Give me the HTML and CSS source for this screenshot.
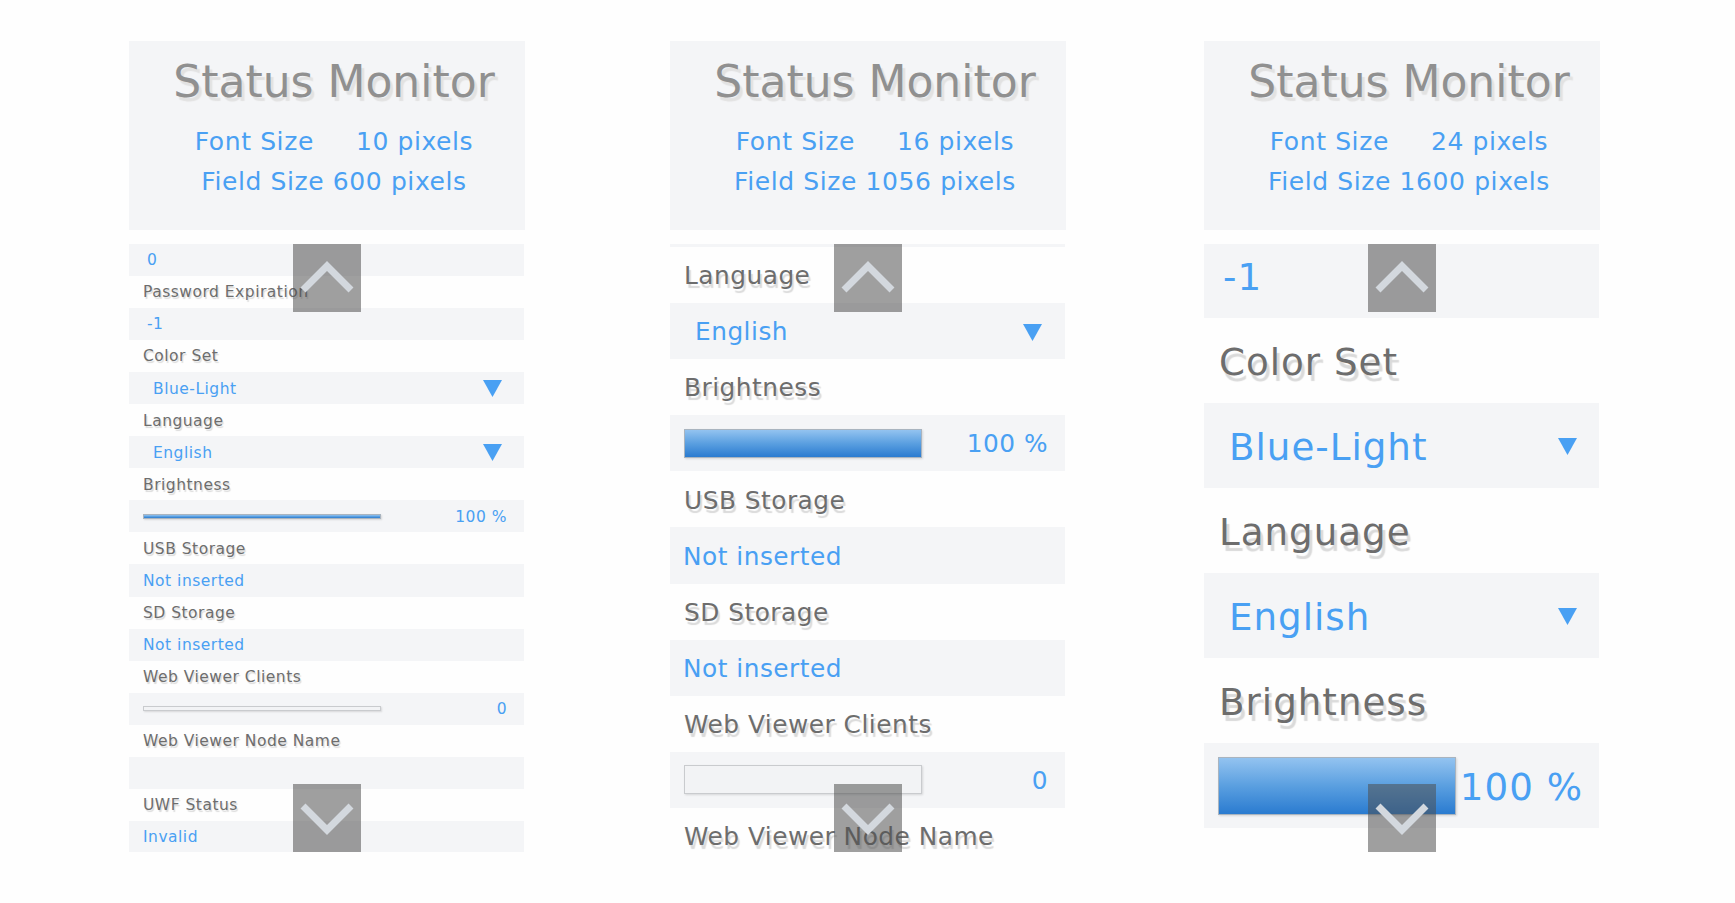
FILE: index.html
```html
<!DOCTYPE html>
<html lang="en">
<head>
<meta charset="utf-8">
<title>Status Monitor</title>
<link rel="stylesheet" href="styles.css">
</head>
<body>
<main class="page">

  <section class="panel p1">
    <header class="head">
      <h1 class="title">Status Monitor</h1>
      <p class="info">Font Size<span class="gap"></span>10 pixels</p>
      <p class="info">Field Size 600 pixels</p>
    </header>
    <div class="viewport">
      <div class="list">
        <div class="row val num">0</div>
        <div class="row label">Password Expiration</div>
        <div class="row val num">-1</div>
        <div class="row label">Color Set</div>
        <div class="row val drop"><span>Blue-Light</span><svg class="tri" viewBox="0 0 19 17"><polygon points="0,0 19,0 9.5,17"/></svg></div>
        <div class="row label">Language</div>
        <div class="row val drop"><span>English</span><svg class="tri" viewBox="0 0 19 17"><polygon points="0,0 19,0 9.5,17"/></svg></div>
        <div class="row label">Brightness</div>
        <div class="row val slide"><div class="bar full"></div><span class="pct">100 %</span></div>
        <div class="row label">USB Storage</div>
        <div class="row val txt">Not inserted</div>
        <div class="row label">SD Storage</div>
        <div class="row val txt">Not inserted</div>
        <div class="row label">Web Viewer Clients</div>
        <div class="row val slide"><div class="bar"></div><span class="pct">0</span></div>
        <div class="row label">Web Viewer Node Name</div>
        <div class="row val txt"></div>
        <div class="row label">UWF Status</div>
        <div class="row val txt">Invalid</div>
      </div>
      <div class="scroll up"><svg viewBox="0 0 68 68"><polyline points="10,46 34,22 58,46"/></svg></div>
      <div class="scroll down"><svg viewBox="0 0 68 68"><polyline points="10,22 34,46 58,22"/></svg></div>
    </div>
  </section>

  <section class="panel p2">
    <header class="head">
      <h1 class="title">Status Monitor</h1>
      <p class="info">Font Size<span class="gap"></span>16 pixels</p>
      <p class="info">Field Size 1056 pixels</p>
    </header>
    <div class="viewport">
      <div class="list">
        <div class="row val"></div>
        <div class="row label">Language</div>
        <div class="row val drop"><span>English</span><svg class="tri" viewBox="0 0 19 17"><polygon points="0,0 19,0 9.5,17"/></svg></div>
        <div class="row label">Brightness</div>
        <div class="row val slide"><div class="bar full"></div><span class="pct">100 %</span></div>
        <div class="row label">USB Storage</div>
        <div class="row val txt">Not inserted</div>
        <div class="row label">SD Storage</div>
        <div class="row val txt">Not inserted</div>
        <div class="row label">Web Viewer Clients</div>
        <div class="row val slide"><div class="bar"></div><span class="pct">0</span></div>
        <div class="row label">Web Viewer Node Name</div>
      </div>
      <div class="scroll up"><svg viewBox="0 0 68 68"><polyline points="10,46 34,22 58,46"/></svg></div>
      <div class="scroll down"><svg viewBox="0 0 68 68"><polyline points="10,22 34,46 58,22"/></svg></div>
    </div>
  </section>

  <section class="panel p3">
    <header class="head">
      <h1 class="title">Status Monitor</h1>
      <p class="info">Font Size<span class="gap"></span>24 pixels</p>
      <p class="info">Field Size 1600 pixels</p>
    </header>
    <div class="viewport">
      <div class="list">
        <div class="row val num">-1</div>
        <div class="row label">Color Set</div>
        <div class="row val drop"><span>Blue-Light</span><svg class="tri" viewBox="0 0 19 17"><polygon points="0,0 19,0 9.5,17"/></svg></div>
        <div class="row label">Language</div>
        <div class="row val drop"><span>English</span><svg class="tri" viewBox="0 0 19 17"><polygon points="0,0 19,0 9.5,17"/></svg></div>
        <div class="row label">Brightness</div>
        <div class="row val slide"><div class="bar full"></div><span class="pct">100 %</span></div>
      </div>
      <div class="scroll up"><svg viewBox="0 0 68 68"><polyline points="10,46 34,22 58,46"/></svg></div>
      <div class="scroll down"><svg viewBox="0 0 68 68"><polyline points="10,22 34,46 58,22"/></svg></div>
    </div>
  </section>

</main>
</body>
</html>
```

FILE: styles.css
```css
* { box-sizing: border-box; }

html, body {
  margin: 0;
  padding: 0;
  background: #fefefe;
}

body {
  font-family: "DejaVu Sans", "Liberation Sans", sans-serif;
}

.page {
  display: flex;
  align-items: flex-start;
  padding: 41px 0 0 129px;
}

.panel {
  width: 396px;
  flex: none;
}

.p2 { margin-left: 145px; }
.p3 { margin-left: 138px; }

/* ---------- header ---------- */
.head {
  height: 189px;
  background: #f4f5f7;
  padding: 15px 0 0 14px;
  text-align: center;
}

.title {
  margin: 0 0 14px;
  font-size: 44px;
  font-weight: normal;
  line-height: 52px;
  color: #909090;
  text-shadow: 3px 4px 1px #e2e2e2;
  white-space: nowrap;
}

.info {
  margin: 0;
  font-size: 25px;
  line-height: 40px;
  letter-spacing: 0.6px;
  color: #49a0f3;
  white-space: nowrap;
}

.gap {
  display: inline-block;
  width: 42px;
}

/* ---------- list ---------- */
.p1 { --fs: 15.5px; --ls: 0.5px; --rh: 32.05px; --bh: 5px;  --shift: 0px;      --vpad: 17px; --lpad: 14px; --npad: 18px; --dpad: 24px; --tpad: 14px; --tri: 22px; }
.p2 { --fs: 24.8px; --ls: 0.5px; --rh: 56.1px;  --bh: 29px; --shift: -53.1px;  --vpad: 17px; --lpad: 14px; --npad: 18px; --dpad: 25px; --tpad: 13px; --tri: 23px; }
.p3 { --fs: 37.2px; --ls: 1px;   --rh: 85px;    --bh: 58px; --shift: -11px;    --vpad: 16px; --lpad: 15px; --npad: 19px; --dpad: 25px; --tpad: 15px; --tri: 22px; }

.viewport {
  position: relative;
  margin-top: 14px;
  width: 395px;
  height: 608px;
  overflow: hidden;
}

.list {
  margin-top: var(--shift);
}

.row {
  height: var(--rh);
  display: flex;
  align-items: center;
  padding-top: 0.08em;
  font-size: var(--fs);
  letter-spacing: var(--ls);
  line-height: 1.2;
  white-space: nowrap;
}

.label {
  padding-left: var(--lpad);
  color: #6d6d6d;
  text-shadow: 0.08em 0.15em 1px #dadada;
}

.val {
  background: #f4f5f7;
  color: #49a0f3;
}

.num { padding-left: var(--npad); }
.txt { padding-left: var(--tpad); }

.drop {
  padding-left: var(--dpad);
  padding-right: var(--tri);
  justify-content: space-between;
}

.tri {
  width: 19px;
  height: 17px;
  flex: none;
  fill: #49a0f3;
}

.slide {
  padding-top: 0;
  padding-left: 14px;
  padding-right: var(--vpad);
}

.bar {
  flex: none;
  width: 238px;
  height: var(--bh);
  border: 1px solid #c9cbce;
  background: #f2f3f5;
  box-shadow: 1px 1px 2px rgba(0, 0, 0, 0.12);
}

.bar.full {
  border-color: #a9b4bf;
  background: linear-gradient(#93c3f0, #5a9fe0 50%, #2a7bd0);
}

.pct {
  flex: 1;
  text-align: right;
  padding-top: 0.08em;
}

/* ---------- scroll buttons ---------- */
.scroll {
  position: absolute;
  left: 50%;
  width: 68px;
  height: 68px;
  margin-left: -34px;
  background: rgba(77, 77, 77, 0.54);
}

.scroll.up { top: 0; }
.scroll.down { bottom: 0; }

.scroll svg {
  display: block;
  width: 68px;
  height: 68px;
  fill: none;
  stroke: #d3d8de;
  stroke-width: 7;
  stroke-linecap: butt;
  stroke-linejoin: miter;
}
```
